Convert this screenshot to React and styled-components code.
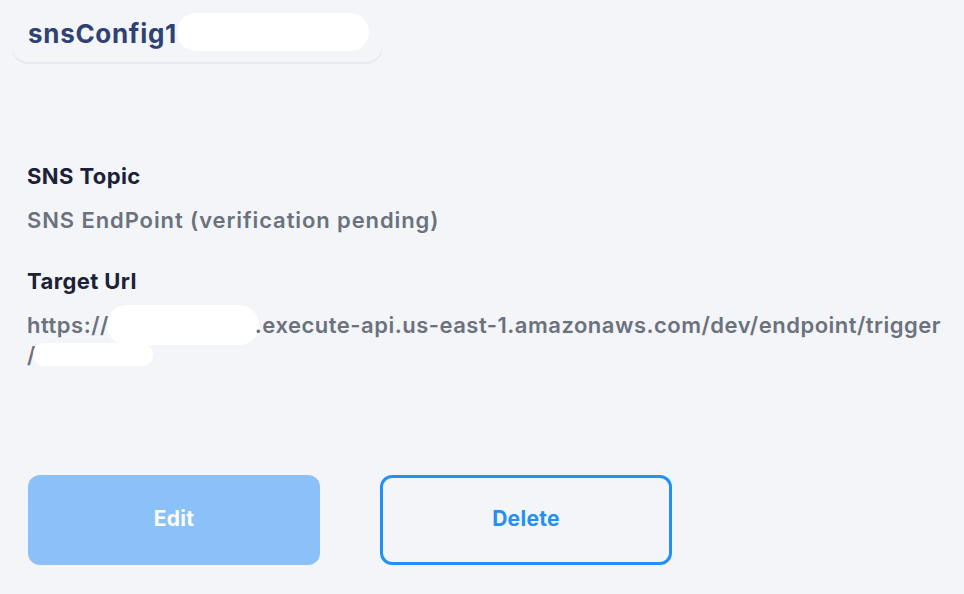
import React from "react";
import styled, { createGlobalStyle } from "styled-components";

const Global = createGlobalStyle`
  html, body { margin: 0; padding: 0; background: #f4f5f9; }
  body { font-family: Inter, "Liberation Sans", Arial, sans-serif; -webkit-font-smoothing: antialiased; }
`;

const Page = styled.div`
  width: 964px;
  height: 594px;
  background: #f4f5f9;
  display: flex;
  flex-direction: column;
  overflow: hidden;
`;

const HeaderCard = styled.div`
  margin-left: 12px;
  width: 370px;
  height: 62px;
  box-sizing: border-box;
  padding: 13px 12px 0 16px;
  border-radius: 0 0 16px 16px;
  background: #f4f5f9;
  box-shadow: 0 2px 1px rgba(30, 40, 80, 0.06);
  display: flex;
  align-items: flex-start;
`;

const Title = styled.h1`
  margin: 2px 0 0 0;
  font-size: 26px;
  line-height: 38px;
  font-weight: 700;
  color: #2f4272;
  letter-spacing: 0.7px;
`;

const Redact = styled.span`
  display: inline-block;
  background: #ffffff;
  width: ${(p) => p.$w}px;
  height: ${(p) => p.$h}px;
  border-radius: ${(p) => p.$h / 2}px;
  vertical-align: middle;
  margin: ${(p) => p.$mt || 0}px ${(p) => p.$mr || 0}px ${(p) => p.$mb || 0}px
    ${(p) => p.$ml || 0}px;
`;

const Content = styled.div`
  padding: 100px 20px 0 27px;
  display: flex;
  flex-direction: column;
`;

const Field = styled.div`
  display: flex;
  flex-direction: column;
  gap: 15px;
  margin-bottom: ${(p) => p.$mb || 0}px;
`;

const Label = styled.div`
  font-size: 22px;
  line-height: 28px;
  font-weight: 700;
  color: #1b2137;
  letter-spacing: 0.4px;
`;

const Value = styled.div`
  font-size: 22px;
  line-height: 30px;
  font-weight: 600;
  color: #6b727d;
  letter-spacing: ${(p) => p.$ls || 0.35}px;
  white-space: nowrap;
`;

const Actions = styled.div`
  display: flex;
  gap: 60px;
  padding-left: 28px;
  margin-top: auto;
  margin-bottom: 29px;
`;

const Button = styled.button`
  width: 292px;
  height: 90px;
  box-sizing: border-box;
  border-radius: 12px;
  font-family: inherit;
  font-size: 21px;
  font-weight: 700;
  letter-spacing: 0.3px;
  cursor: pointer;
  padding: 0 0 3px 0;
  border: 3px solid ${(p) => (p.$outline ? "#2290f6" : "transparent")};
  background: ${(p) => (p.$outline ? "transparent" : "#89c1f8")};
  color: ${(p) => (p.$outline ? "#2290f6" : "#ffffff")};
`;

export default function App() {
  return (
    <Page>
      <Global />
      <HeaderCard>
        <Title>snsConfig1</Title>
        <Redact $w={192} $h={38} />
      </HeaderCard>
      <Content>
        <Field $mb={32}>
          <Label>SNS Topic</Label>
          <Value $ls={0.9}>SNS EndPoint (verification pending)</Value>
        </Field>
        <Field>
          <Label>Target Url</Label>
          <Value $ls={0.5}>
            https://
            <Redact $w={152} $h={40} $ml={-2} $mr={-4} $mt={-10} $mb={-6} />
            .execute-api.us-east-1.amazonaws.com/dev/endpoint/trigger
            <br />/
            <Redact $w={120} $h={23} $ml={-3} $mt={-6} $mb={0} />
          </Value>
        </Field>
      </Content>
      <Actions>
        <Button disabled>Edit</Button>
        <Button $outline>Delete</Button>
      </Actions>
    </Page>
  );
}
